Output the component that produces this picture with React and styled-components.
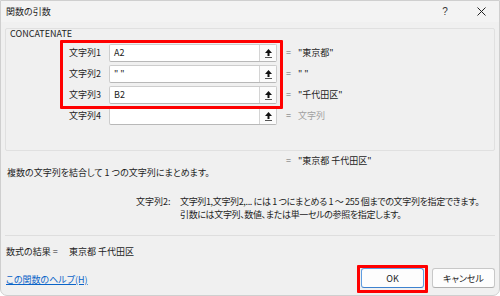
import React from "react";
import styled, { createGlobalStyle } from "styled-components";

const Global = createGlobalStyle`
  html, body { margin: 0; padding: 0; background: #ffffff; }
  body { font-family: "Noto Sans CJK JP", "Noto Sans", sans-serif; }
  * { box-sizing: border-box; }
`;

const Dialog = styled.div`
  position: relative;
  width: 500px;
  height: 296px;
  background: #f0f0f0;
  border: 1px solid #cfcfcf;
  border-radius: 0 0 7px 7px;
  display: flex;
  flex-direction: column;
  font-size: 9px;
  color: #1c1c1c;
  font-feature-settings: "palt";
  overflow: hidden;
`;

const TitleBar = styled.div`
  height: 21px;
  display: flex;
  align-items: center;
  padding-left: 5px;
  background: #f3f3f3;
`;

const Title = styled.div`
  flex: 1;
  font-size: 9px;
  line-height: 12px;
`;

const TitleButton = styled.div`
  width: 36px;
  height: 21px;
  display: flex;
  align-items: center;
  justify-content: center;
  color: #333;
  font-size: 10px;
  font-family: "Liberation Sans", sans-serif;
`;

const Body = styled.div`
  flex: 1;
  padding: 0 4px;
  display: flex;
  flex-direction: column;
`;

const GroupBox = styled.div`
  margin-top: 6px;
  height: 123px;
  border: 1px solid #e0e0e0;
  border-radius: 2px;
  display: flex;
  flex-direction: column;
`;

const FuncName = styled.div`
  padding-left: 4px;
  height: 10px;
  line-height: 10px;
  margin-bottom: 5px;
`;

const ArgRow = styled.div`
  display: flex;
  align-items: center;
  height: 18px;
  margin-bottom: 3px;
`;

const ArgLabel = styled.div`
  width: 96px;
  text-align: right;
  padding-right: 1px;
  margin-right: 7px;
  line-height: 12px;
`;

const InputBox = styled.div`
  width: 168px;
  height: 18px;
  background: #ffffff;
  border: 1px solid #cdcdcd;
  border-bottom-color: #b8b8b8;
  border-radius: 2px;
  display: flex;
  align-items: stretch;
`;

const InputText = styled.div`
  flex: 1;
  padding-left: 4px;
  line-height: 16px;
  font-size: 9px;
`;

const RefButton = styled.div`
  width: 17px;
  border-left: 1px solid #d4d4d4;
  background: #fbfbfb;
  display: flex;
  align-items: center;
  justify-content: center;
`;

const Equals = styled.div`
  margin-left: ${(p) => (p.$flush ? "0" : "9px")};
  width: 12px;
  color: #666;
  line-height: 12px;
`;

const Value = styled.div`
  line-height: 12px;
  color: ${(p) => (p.$muted ? "#a0a0a0" : "#1c1c1c")};
`;

const ResultRow = styled.div`
  display: flex;
  margin-top: 4px;
  padding-left: 281px;
  height: 12px;
  line-height: 12px;
`;

const Description = styled.div`
  padding-left: 2px;
  line-height: 12px;
  height: 12px;
`;

const ArgHelp = styled.div`
  margin-top: 16px;
  display: flex;
  padding-left: 131px;
  line-height: 13px;
  white-space: nowrap;
`;

const ArgHelpName = styled.div`
  width: 44px;
`;

const ArgHelpText = styled.div`
  flex: 1;
  letter-spacing: -0.35px;
`;

const Separator = styled.div`
  margin-top: 14px;
  height: 1px;
  background: #dedede;
`;

const FormulaResult = styled.div`
  margin-top: 10px;
  padding-left: 1px;
  line-height: 12px;
  display: flex;
`;

const FormulaLabel = styled.span`
  width: 63px;
`;

const Footer = styled.div`
  margin-top: 10px;
  display: flex;
  align-items: center;
  height: 20px;
`;

const HelpLink = styled.a`
  flex: 1;
  color: #0a64c8;
  text-decoration: underline;
  padding-left: 1px;
  padding-top: 4px;
  line-height: 12px;
  cursor: pointer;
`;

const Button = styled.button`
  width: 63px;
  height: 20px;
  margin-left: ${(p) => (p.$first ? "0" : "8px")};
  background: #fdfdfd;
  border: 1px solid ${(p) => (p.$default ? "#5f9de0" : "#c8c8c8")};
  border-bottom-color: ${(p) => (p.$default ? "#3d82cf" : "#b0b0b0")};
  border-radius: 3px;
  font-family: "Noto Sans CJK JP", "Noto Sans", sans-serif;
  font-feature-settings: "palt";
  font-size: 9px;
  color: #1c1c1c;
  padding: 0;
`;

const Highlight = styled.div`
  position: absolute;
  left: ${(p) => p.$x}px;
  top: ${(p) => p.$y}px;
  width: ${(p) => p.$w}px;
  height: ${(p) => p.$h}px;
  border: 3px solid #ff0000;
  border-radius: 1px;
  pointer-events: none;
`;

const RefIcon = () => (
  <svg width="9" height="11" viewBox="0 0 9 11">
    <path d="M4.5 1 L1 5 L3.5 5 L3.5 8 L5.5 8 L5.5 5 L8 5 Z" fill="#111" />
    <rect x="1" y="9" width="7" height="1" fill="#555" />
  </svg>
);

const CloseIcon = () => (
  <svg width="9" height="9" viewBox="0 0 9 9">
    <path d="M0.5 0.5 L8.5 8.5 M8.5 0.5 L0.5 8.5" stroke="#222" strokeWidth="1" />
  </svg>
);

const args = [
  { label: "文字列1", input: "A2", value: "\"東京都\"" },
  { label: "文字列2", input: "\" \"", value: "\" \"" },
  { label: "文字列3", input: "B2", value: "\"千代田区\"" },
  { label: "文字列4", input: "", value: "文字列", muted: true },
];

export default function App() {
  return (
    <>
      <Global />
      <Dialog>
        <TitleBar>
          <Title>関数の引数</Title>
          <TitleButton>?</TitleButton>
          <TitleButton>
            <CloseIcon />
          </TitleButton>
        </TitleBar>
        <Body>
          <GroupBox>
            <FuncName>CONCATENATE</FuncName>
            {args.map((a) => (
              <ArgRow key={a.label}>
                <ArgLabel>{a.label}</ArgLabel>
                <InputBox>
                  <InputText>{a.input}</InputText>
                  <RefButton>
                    <RefIcon />
                  </RefButton>
                </InputBox>
                <Equals>=</Equals>
                <Value $muted={a.muted}>{a.value}</Value>
              </ArgRow>
            ))}
          </GroupBox>
          <ResultRow>
            <Equals $flush>=</Equals>
            <Value>"東京都 千代田区"</Value>
          </ResultRow>
          <Description>複数の文字列を結合して 1 つの文字列にまとめます。</Description>
          <ArgHelp>
            <ArgHelpName>文字列2:</ArgHelpName>
            <ArgHelpText>
              文字列1,文字列2,... には 1 つにまとめる 1 ～ 255 個までの文字列を指定できます。
              <br />
              引数には文字列、数値、または単一セルの参照を指定します。
            </ArgHelpText>
          </ArgHelp>
          <Separator />
          <FormulaResult>
            <FormulaLabel>数式の結果 =</FormulaLabel>
            <span>東京都 千代田区</span>
          </FormulaResult>
          <Footer>
            <HelpLink>この関数のヘルプ(H)</HelpLink>
            <Button $default $first>OK</Button>
            <Button>キャンセル</Button>
          </Footer>
        </Body>
        <Highlight $x={59} $y={39} $w={223} $h={69} />
        <Highlight $x={356} $y={264} $w={71} $h={28} />
      </Dialog>
    </>
  );
}
